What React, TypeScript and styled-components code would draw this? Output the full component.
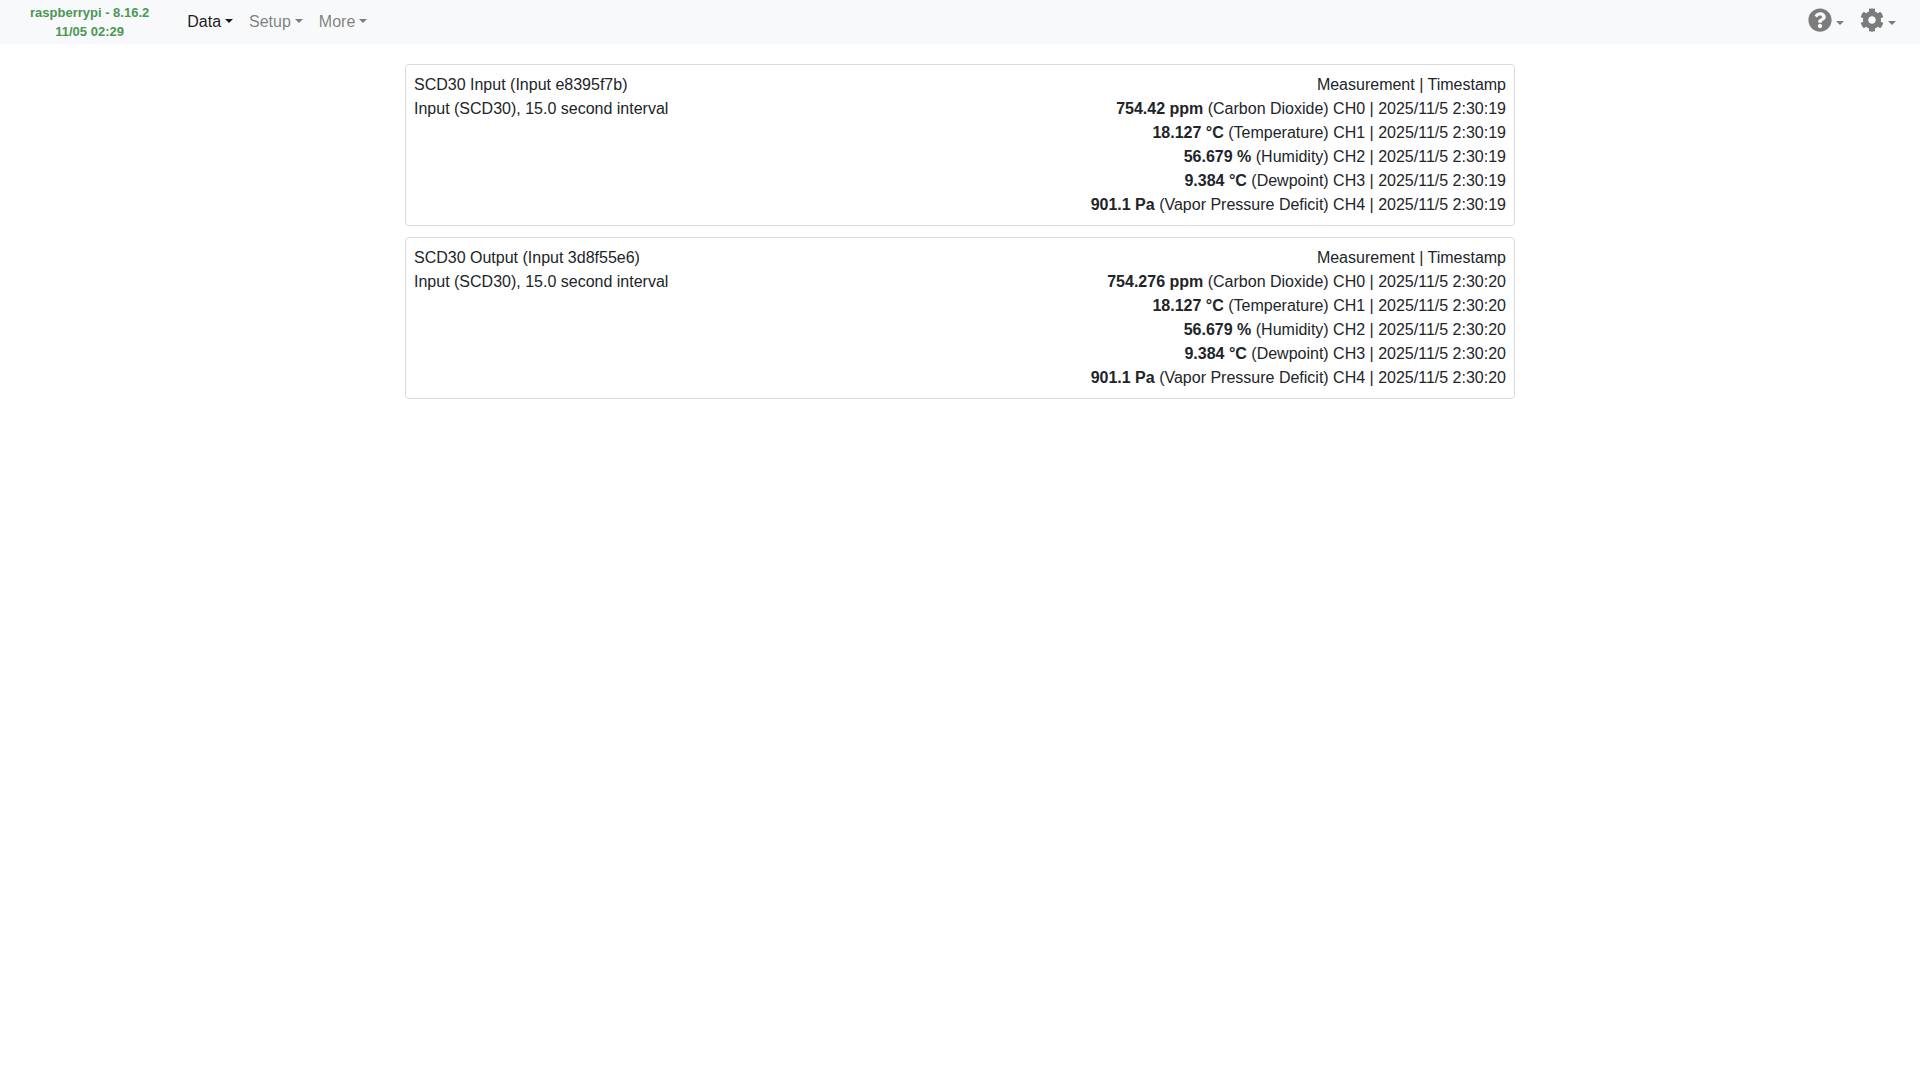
import React from "react";
import styled, { createGlobalStyle } from "styled-components";
import { FaCog, FaQuestionCircle } from "react-icons/fa";

const GlobalStyle = createGlobalStyle`
  *, *::before, *::after {
    box-sizing: border-box;
  }
  body {
    margin: 0;
    background: #fff;
    color: #212529;
    font-family: "Liberation Sans", Arial, sans-serif;
    font-size: 16px;
    line-height: 24px;
  }
`;

const Navbar = styled.nav`
  display: flex;
  align-items: center;
  gap: 16px;
  padding: 3px 16px;
  background: #f8f9fa;
`;

const Brand = styled.a`
  padding: 0 14px;
  color: #4b9754;
  font-size: 13px;
  font-weight: 700;
  line-height: 19px;
  text-align: center;
  text-decoration: none;
`;

const BrandLine = styled.span`
  display: block;
`;

const NavGroup = styled.div<{ $end?: boolean }>`
  display: flex;
  align-items: center;
  margin-left: ${({ $end }) => ($end ? "auto" : "0")};
`;

const NavToggle = styled.button<{ $active?: boolean }>`
  display: flex;
  align-items: center;
  gap: 4px;
  padding: 0 8px;
  border: 0;
  background: none;
  color: ${({ $active }) => ($active ? "rgba(0, 0, 0, 0.9)" : "rgba(0, 0, 0, 0.5)")};
  font: inherit;
  cursor: pointer;

  &::after {
    content: "";
    margin-bottom: 2px;
    border-top: 4px solid;
    border-right: 4px solid transparent;
    border-left: 4px solid transparent;
  }
`;

const IconToggle = styled(NavToggle)`
  padding-bottom: 4px;

  &::after {
    margin-top: 6px;
    margin-bottom: 0;
  }
`;

const Container = styled.main`
  display: flex;
  flex-direction: column;
  gap: 11px;
  max-width: 1140px;
  margin: 0 auto;
  padding: 20px 15px;
`;

const Card = styled.section`
  display: flex;
  justify-content: space-between;
  gap: 16px;
  padding: 8px;
  border: 1px solid #dbdcdd;
  border-radius: 4px;
`;

const Readings = styled.div`
  text-align: right;
`;

type Reading = { value: string; name: string };

type Sensor = {
  title: string;
  time: string;
  readings: Reading[];
};

const sharedReadings: Reading[] = [
  { value: "18.127 °C", name: "Temperature" },
  { value: "56.679 %", name: "Humidity" },
  { value: "9.384 °C", name: "Dewpoint" },
  { value: "901.1 Pa", name: "Vapor Pressure Deficit" },
];

const sensors: Sensor[] = [
  {
    title: "SCD30 Input (Input e8395f7b)",
    time: "2025/11/5 2:30:19",
    readings: [{ value: "754.42 ppm", name: "Carbon Dioxide" }, ...sharedReadings],
  },
  {
    title: "SCD30 Output (Input 3d8f55e6)",
    time: "2025/11/5 2:30:20",
    readings: [{ value: "754.276 ppm", name: "Carbon Dioxide" }, ...sharedReadings],
  },
];

function SensorCard({ title, time, readings }: Sensor) {
  return (
    <Card>
      <div>
        <div>{title}</div>
        <div>Input (SCD30), 15.0 second interval</div>
      </div>
      <Readings>
        <div>Measurement | Timestamp</div>
        {readings.map(({ value, name }, channel) => (
          <div key={name}>
            <strong>{value}</strong> {`(${name}) CH${channel} | ${time}`}
          </div>
        ))}
      </Readings>
    </Card>
  );
}

export default function App() {
  return (
    <>
      <GlobalStyle />
      <Navbar>
        <Brand href="#">
          <BrandLine>raspberrypi - 8.16.2</BrandLine>
          <BrandLine>11/05 02:29</BrandLine>
        </Brand>
        <NavGroup>
          <NavToggle type="button" $active>Data</NavToggle>
          <NavToggle type="button">Setup</NavToggle>
          <NavToggle type="button">More</NavToggle>
        </NavGroup>
        <NavGroup $end>
          <IconToggle type="button" aria-label="Help">
            <FaQuestionCircle size={24} />
          </IconToggle>
          <IconToggle type="button" aria-label="Settings">
            <FaCog size={24} />
          </IconToggle>
        </NavGroup>
      </Navbar>
      <Container>
        {sensors.map((sensor) => (
          <SensorCard key={sensor.title} {...sensor} />
        ))}
      </Container>
    </>
  );
}
